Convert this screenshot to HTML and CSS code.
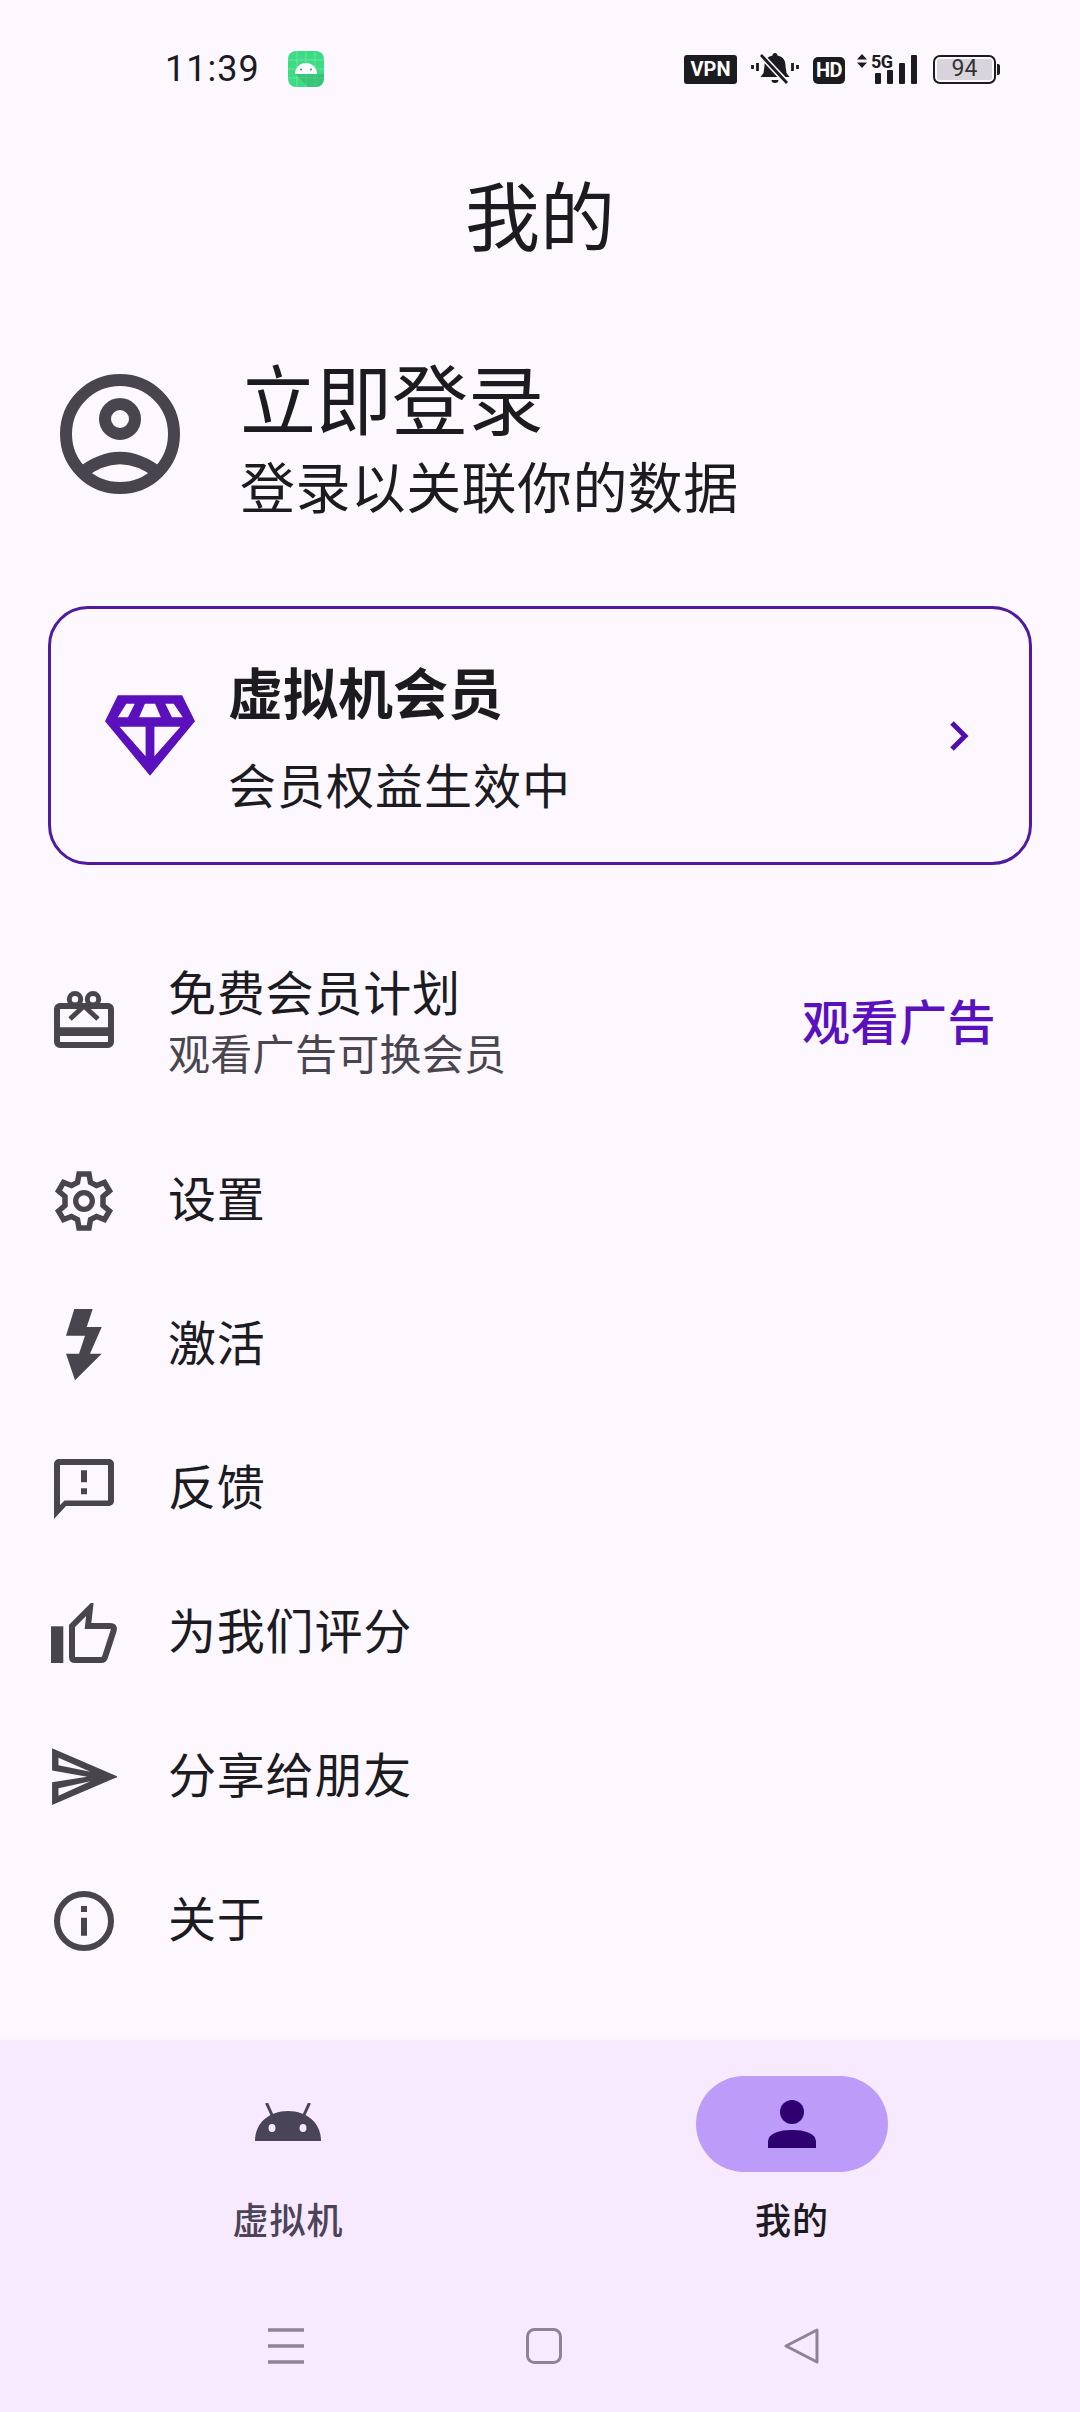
FILE: index.html
```html
<!DOCTYPE html>
<html>
<head>
  <meta charset="UTF-8">
  <title>我的</title>
  <link rel="stylesheet" href="styles.css">
</head>
<body>
  <div class="screen">
    <!-- Status bar -->
    <div class="status-bar">
      <div class="status-left">
        <span class="clock">11:39</span>
        <svg class="app-badge" viewBox="0 0 36 36">
          <rect width="36" height="36" rx="8" fill="#3ddc84"/>
          <path d="M9 0v36 M18 0v36 M27 0v36 M0 9h36 M0 18h36 M0 27h36" stroke="#7fe8ae" stroke-width="0.700"/>
          <path d="M7 23 L20 36 H28 a8 8 0 0 0 8-8 V23z" fill="#2fae69" opacity="0.500"/>
          <path d="M7 23 a11 11 0 0 1 22 0 z" fill="#fff"/>
          <circle cx="13" cy="18.500" r="1" fill="#3b8a60"/>
          <circle cx="23" cy="18.500" r="1" fill="#3b8a60"/>
        </svg>
      </div>
      <div class="status-right">
        <span class="chip-vpn">VPN</span>
        <svg class="ico-bell" viewBox="0 0 48 34">
          <path d="M24 1 c-1.500 0-2.500 1-2.500 2.500 C15 5 13.500 9 13.500 14 l-1 7 -3 4 h29 l-3-4 -1-7 c0-5-1.500-9-8-10.500 C26.500 2 25.500 1 24 1z M20.500 28 a3.500 3 0 0 0 7 0z" fill="#1c1b1f"/>
          <path d="M9 2 L37 32" stroke="#fdf7ff" stroke-width="6"/>
          <path d="M10 3 L36 31" stroke="#1c1b1f" stroke-width="2.800"/>
          <path d="M1.500 13v4 M6.500 11v8 M41.500 11v8 M46.500 13v4" stroke="#1c1b1f" stroke-width="2.800"/>
        </svg>
        <span class="chip-hd">HD</span>
        <div class="signal">
          <div class="signal-top">
            <svg class="updown" viewBox="0 0 10 14"><path d="M5 0l5 5.500H0z M5 14l5-5.500H0z" fill="#1c1b1f"/></svg>
            <span class="five-g">5G</span>
          </div>
          <div class="bars">
            <i class="bar-1"></i>
            <i class="bar-2"></i>
            <i class="bar-3"></i>
            <i class="bar-4"></i>
          </div>
        </div>
        <div class="battery">
          <div class="battery-body"><span class="battery-num">94</span></div>
          <div class="battery-cap"></div>
        </div>
      </div>
    </div>

    <h1 class="page-title">我的</h1>

    <!-- Account -->
    <div class="account">
      <svg class="account-ico" viewBox="0 0 120 120">
        <circle cx="60" cy="60" r="54" fill="none" stroke="#49454f" stroke-width="12"/>
        <circle cx="60" cy="45" r="15" fill="none" stroke="#49454f" stroke-width="12"/>
        <path d="M20 100 Q60 68 100 100" fill="none" stroke="#49454f" stroke-width="12"/>
      </svg>
      <div class="account-text">
        <div class="account-name">立即登录</div>
        <div class="account-sub">登录以关联你的数据</div>
      </div>
    </div>

    <!-- Member card -->
    <div class="member-card">
      <svg class="diamond" viewBox="0 0 266 238">
        <path fill-rule="evenodd" fill="#5a10bd" d="M38 0H228L266 77 133 238 0 77z M63 25H88L68 65H38z M118 25H148L165 65H101z M178 25H203L230 65H198z M43 93H120V180z M146 93H223L146 180z"/>
      </svg>
      <div class="member-text">
        <div class="member-name">虚拟机会员</div>
        <div class="member-sub">会员权益生效中</div>
      </div>
      <svg class="chevron" viewBox="0 0 20 30"><path d="M3 2l13 13 -13 13" fill="none" stroke="#4f0fb0" stroke-width="5"/></svg>
    </div>

    <!-- Menu -->
    <div class="menu">
      <div class="row row-promo">
        <svg class="row-ico ico-gift" viewBox="0 0 60 57">
          <rect x="3" y="15" width="54" height="39" rx="3" fill="none" stroke="#49454f" stroke-width="6"/>
          <path d="M3 40.700h54" stroke="#49454f" stroke-width="8.700"/>
          <circle cx="21" cy="8.300" r="5.700" fill="#fdf7ff" stroke="#49454f" stroke-width="5"/>
          <circle cx="39" cy="8.300" r="5.700" fill="#fdf7ff" stroke="#49454f" stroke-width="5"/>
          <path d="M30 15L16 28 M30 15L44 28" stroke="#49454f" stroke-width="5"/>
        </svg>
        <div class="promo-text">
          <div class="row-label">免费会员计划</div>
          <div class="promo-sub">观看广告可换会员</div>
        </div>
        <span class="promo-action">观看广告</span>
      </div>

      <div class="row">
        <svg class="row-ico" viewBox="0 0 60 60">
          <path d="M25 3h10l1.500 8.500 6 3 8-3 5 8.500 -6.500 5.500v9l6.500 5.500 -5 8.500 -8-3 -6 3 -1.500 8.500H25l-1.500-8.500 -6-3 -8 3 -5-8.500 6.500-5.500v-9l-6.500-5.500 5-8.500 8 3 6-3z" fill="none" stroke="#49454f" stroke-width="5.500"/>
          <circle cx="30" cy="30" r="8.300" fill="none" stroke="#49454f" stroke-width="5.300"/>
        </svg>
        <div class="row-label">设置</div>
      </div>

      <div class="row">
        <svg class="row-ico ico-bolt" viewBox="0 0 36 72">
          <path d="M8.300 0H26.700L20.700 18H35.700L24 44.700H35.700L9 71.300 0 44.700H13L19 26.700H0z" fill="#49454f"/>
        </svg>
        <div class="row-label">激活</div>
      </div>

      <div class="row">
        <svg class="row-ico" viewBox="0 0 60 60">
          <path fill-rule="evenodd" fill="#49454f" d="M0 60V5a5 5 0 0 1 5-5H55a5 5 0 0 1 5 5V42a5 5 0 0 1-5 5H12z M6 46L10.500 41.500H54V6H6z"/>
          <path d="M27 11.300h6v12h-6z M27 29.300h6v6h-6z" fill="#49454f"/>
        </svg>
        <div class="row-label">反馈</div>
      </div>

      <div class="row">
        <svg class="row-ico" viewBox="0 0 66 60">
          <path d="M0 23.300h12.300V60H0z" fill="#49454f"/>
          <path d="M21 23L39 5 L37 23H59C63 23 63.500 25 62.500 28L54 54C53.500 56 52 57 50 57H24C22 57 21 56 21 54z" fill="none" stroke="#49454f" stroke-width="6"/>
        </svg>
        <div class="row-label">为我们评分</div>
      </div>

      <div class="row">
        <svg class="row-ico" viewBox="-1 0 62 54">
          <path fill-rule="evenodd" fill="#49454f" d="M0 0L62 26.700 0 53.300V32L33 26.700 0 21z M6 9V16L36 22z M6 37.500V44.500L36 31z"/>
        </svg>
        <div class="row-label">分享给朋友</div>
      </div>

      <div class="row">
        <svg class="row-ico" viewBox="0 0 60 60">
          <circle cx="30" cy="30" r="27" fill="none" stroke="#49454f" stroke-width="6"/>
          <path d="M27 26.700h6v18h-6z M27 15h6v6h-6z" fill="#49454f"/>
        </svg>
        <div class="row-label">关于</div>
      </div>
    </div>

    <!-- Bottom nav -->
    <div class="bottom">
      <div class="tabs">
        <div class="tab">
          <div class="tab-ico">
            <svg class="ico-android" viewBox="0 0 66 38">
              <path d="M0 38 C0 20 14 8 33 8 C52 8 66 20 66 38z" fill="#4a4458"/>
              <path d="M17 12L11.500 0 M49 12L54.500 0" stroke="#4a4458" stroke-width="3"/>
              <ellipse cx="17" cy="25" rx="3.500" ry="4" fill="#f7e9fe"/>
              <ellipse cx="48" cy="25" rx="3.500" ry="4" fill="#f7e9fe"/>
            </svg>
          </div>
          <div class="tab-label">虚拟机</div>
        </div>
        <div class="tab tab-active">
          <div class="tab-ico">
            <svg class="ico-person" viewBox="0 0 48 48">
              <circle cx="24" cy="12" r="12" fill="#2e0070"/>
              <path d="M0 48V42C0 33 12 30 24 30s24 3 24 12v6z" fill="#2e0070"/>
            </svg>
          </div>
          <div class="tab-label">我的</div>
        </div>
      </div>
      <div class="nav-keys">
        <svg class="key" viewBox="0 0 36 36"><path d="M0 2h36 M0 18h36 M0 34h36" stroke="#8e8299" stroke-width="3.500"/></svg>
        <svg class="key" viewBox="0 0 36 36"><rect x="1.500" y="1.500" width="33" height="33" rx="7" fill="none" stroke="#8e8299" stroke-width="3"/></svg>
        <svg class="key" viewBox="0 0 36 36"><path d="M33 2L2 18l31 16z" fill="none" stroke="#8e8299" stroke-width="3" stroke-linejoin="round"/></svg>
      </div>
    </div>
  </div>
</body>
</html>
```

FILE: styles.css
```css
* { box-sizing: border-box; }
html, body { margin: 0; padding: 0; }
body { width: 1080px; height: 2412px; background: #fdf7ff; color: #1c1b1f; font-family: "Noto Sans CJK SC", Roboto, sans-serif; overflow: hidden; }
.screen { width: 1080px; height: 2412px; display: flex; flex-direction: column; }

.status-bar { height: 70px; margin-top: 34px; padding: 0 80px 0 165px; display: flex; align-items: center; justify-content: space-between; flex-shrink: 0; }
.status-left { display: flex; align-items: center; gap: 28px; }
.clock { font-family: Roboto, sans-serif; font-size: 36px; letter-spacing: 1px; }
.app-badge { width: 36px; height: 36px; }
.status-right { display: flex; align-items: center; gap: 14px; }
.chip-vpn { background: #1c1b1f; color: #fff; font-family: Roboto, sans-serif; font-weight: 700; font-size: 20px; width: 53px; height: 29px; border-radius: 3px; display: flex; align-items: center; justify-content: center; }
.ico-bell { width: 48px; height: 34px; }
.chip-hd { background: #1c1b1f; color: #fff; font-family: Roboto, sans-serif; font-weight: 700; font-size: 20px; width: 32px; height: 27px; margin-top: 2px; border-radius: 5px; display: flex; align-items: center; justify-content: center; letter-spacing: -0.500px; }
.signal { display: grid; width: 60px; height: 30px; margin-left: -2px; }
.signal-top { grid-area: 1 / 1; align-self: start; display: flex; align-items: center; gap: 4px; height: 14px; }
.updown { width: 10px; height: 14px; }
.five-g { font-family: Roboto, sans-serif; font-weight: 700; font-size: 18px; letter-spacing: -0.500px; }
.bars { grid-area: 1 / 1; align-self: end; justify-self: end; display: flex; align-items: flex-end; gap: 6px; }
.bars i { display: block; width: 6px; background: #1c1b1f; border-radius: 1px; }
.bar-1 { height: 11px; }
.bar-2 { height: 14px; }
.bar-3 { height: 21px; }
.bar-4 { height: 29px; }
.battery { display: flex; align-items: center; gap: 1px; margin-left: 2px; }
.battery-body { width: 63px; height: 29px; border: 2.500px solid #1c1b1f; border-radius: 7px; padding: 2px; background: #fdf7ff; display: flex; }
.battery-num { flex: 1; background: #d8d4dc; border-radius: 2px; font-family: Roboto, sans-serif; font-size: 23px; line-height: 20px; text-align: center; color: #333; }
.battery-cap { width: 3px; height: 11px; background: #1c1b1f; border-radius: 0 2px 2px 0; }

.page-title { margin: 54px 0 0; height: 110px; text-align: center; font-size: 75px; font-weight: 400; line-height: 110px; flex-shrink: 0; }

.account { height: 190px; margin-top: 71px; padding-left: 60px; display: flex; align-items: center; gap: 60px; flex-shrink: 0; }
.account-ico { width: 120px; height: 120px; flex-shrink: 0; }
.account-text { padding-top: 4px; }
.account-name { font-size: 76px; line-height: 96px; }
.account-sub { font-size: 55px; line-height: 80px; letter-spacing: 0.400px; }

.member-card { width: 984px; height: 259px; margin: 77px 0 0 48px; border: 3px solid #4f1a9c; border-radius: 40px; padding: 0 60px 0 54px; display: flex; align-items: center; flex-shrink: 0; }
.diamond { width: 90px; height: 81px; flex-shrink: 0; }
.member-text { margin-left: 33px; flex: 1; }
.member-name { font-size: 55px; font-weight: 700; line-height: 72px; margin-bottom: 23px; }
.member-sub { font-size: 48px; line-height: 68px; letter-spacing: 1px; }
.chevron { width: 20px; height: 30px; }

.menu { margin-top: 90px; display: flex; flex-direction: column; flex: 1; }
.row { height: 144px; padding-left: 51px; display: flex; align-items: center; flex-shrink: 0; }
.row-promo { height: 128px; padding-right: 84px; margin-bottom: 41px; }
.row-ico { width: 66px; height: 60px; flex-shrink: 0; margin: 10px 51px 0 0; }
.ico-gift { height: 57px; margin-top: 0; }
.ico-bolt { height: 72px; }
.row-label { font-size: 48px; line-height: 66px; letter-spacing: 0.800px; }
.promo-text { flex: 1; }
.promo-sub { font-size: 42px; line-height: 58px; color: #49454f; letter-spacing: 0.300px; }
.promo-action { color: #5a10bd; font-size: 48px; font-weight: 500; letter-spacing: 0.500px; }

.bottom { height: 372px; background: #f7e9fe; flex-shrink: 0; display: flex; flex-direction: column; }
.tabs { display: flex; padding: 36px 36px 0; }
.tab { width: 50%; display: flex; flex-direction: column; align-items: center; }
.tab-ico { width: 192px; height: 96px; border-radius: 48px; display: flex; align-items: center; justify-content: center; }
.tab-active .tab-ico { background: #bd9cf9; }
.ico-android { width: 66px; height: 38px; margin-bottom: 4px; }
.ico-person { width: 48px; height: 48px; }
.tab-label { font-size: 36px; font-weight: 500; margin-top: 21px; line-height: 50px; color: #4a4458; letter-spacing: 1px; }
.tab-active .tab-label { color: #1c1b1f; }
.nav-keys { margin-top: 85px; padding-left: 268px; display: flex; gap: 222px; }
.key { width: 36px; height: 36px; }
```
